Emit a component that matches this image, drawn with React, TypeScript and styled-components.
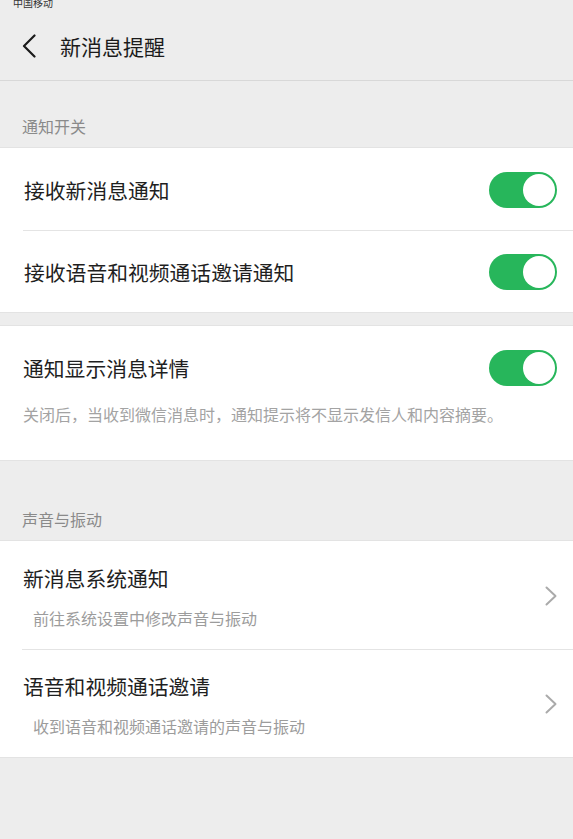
import React from "react";
import styled, { createGlobalStyle } from "styled-components";

const GlobalStyle = createGlobalStyle`
  html, body {
    margin: 0;
    padding: 0;
    background: #ededed;
  }
  body {
    font-family: "Noto Sans CJK SC", "Noto Sans", sans-serif;
    -webkit-font-smoothing: antialiased;
  }
  * { box-sizing: border-box; }
`;

const Page = styled.div`
  width: 573px;
  min-height: 839px;
  background: #ededed;
  display: flex;
  flex-direction: column;
`;

const StatusBar = styled.div`
  height: 12px;
  overflow: hidden;
  display: flex;
  align-items: flex-end;
  padding-left: 13px;
`;

const Carrier = styled.span`
  font-size: 10px;
  line-height: 10px;
  color: #333;
  transform: translateY(-4px);
`;

const NavBar = styled.div`
  height: 69px;
  display: flex;
  align-items: center;
  padding-left: 22px;
  gap: 24px;
  border-bottom: 1px solid #d8d8d8;
`;

const NavTitle = styled.h1`
  margin: 0;
  font-size: 21px;
  font-weight: 400;
  color: #1b1b1b;
  line-height: 28px;
`;

const SectionLabel = styled.div<{ $h: number }>`
  height: ${(p) => p.$h}px;
  display: flex;
  align-items: flex-end;
  padding: 0 0 10px 22px;
  font-size: 16px;
  line-height: 22px;
  color: #8a8a8a;
`;

const Card = styled.div<{ $mt?: number }>`
  background: #fff;
  margin-top: ${(p) => p.$mt ?? 0}px;
  border-top: 1px solid #e3e3e3;
  border-bottom: 1px solid #e3e3e3;
`;

const ToggleRow = styled.div<{ $h: number; $sep?: boolean }>`
  height: ${(p) => p.$h}px;
  display: flex;
  align-items: center;
  justify-content: space-between;
  padding: 0 16px 0 24px;
  position: relative;
  ${(p) =>
    p.$sep
      ? `&::after {
    content: "";
    position: absolute;
    left: 23px;
    right: 0;
    bottom: 0;
    height: 1px;
    background: #e4e4e4;
  }`
      : ""}
`;

const RowTitle = styled.span`
  font-size: 20.8px;
  line-height: 28px;
  color: #1f1f1f;
`;

const DetailBlock = styled.div`
  padding: 24px 0 34px 0;
`;

const DetailHead = styled.div`
  display: flex;
  align-items: center;
  justify-content: space-between;
  padding: 0 16px 0 23px;
  height: 36px;
`;

const Desc = styled.div`
  margin-top: 16px;
  padding-left: 23px;
  font-size: 16px;
  line-height: 24px;
  color: #a3a3a3;
  white-space: nowrap;
`;

const Toggle = styled.div`
  width: 68px;
  height: 36px;
  border-radius: 18px;
  background: #27b65b;
  position: relative;
  flex-shrink: 0;
`;

const Knob = styled.div`
  position: absolute;
  top: 2px;
  right: 2px;
  width: 32px;
  height: 32px;
  border-radius: 50%;
  background: #fff;
`;

const LinkRow = styled.div<{ $h: number; $sep?: boolean }>`
  height: ${(p) => p.$h}px;
  display: flex;
  align-items: center;
  justify-content: space-between;
  padding: 0 16px 0 23px;
  position: relative;
  ${(p) =>
    p.$sep
      ? `&::after {
    content: "";
    position: absolute;
    left: 22px;
    right: 0;
    bottom: 0;
    height: 1px;
    background: #e4e4e4;
  }`
      : ""}
`;

const LinkText = styled.div`
  display: flex;
  flex-direction: column;
  gap: 14px;
  padding-top: 3px;
`;

const LinkSub = styled.span`
  padding-left: 10px;
  font-size: 16px;
  line-height: 24px;
  color: #9c9c9c;
`;

const BackIcon = () => (
  <svg width="14" height="24" viewBox="0 0 14 24" fill="none">
    <polyline
      points="12.5,1.5 2,12 12.5,22.5"
      stroke="#1b1b1b"
      strokeWidth="2.2"
      strokeLinecap="round"
      strokeLinejoin="round"
    />
  </svg>
);

const Chevron = () => (
  <svg width="12" height="20" viewBox="0 0 12 20" fill="none">
    <polyline
      points="1.5,1.5 10.5,10 1.5,18.5"
      stroke="#aaaaaa"
      strokeWidth="2"
      strokeLinecap="round"
      strokeLinejoin="round"
    />
  </svg>
);

const Switch = () => (
  <Toggle>
    <Knob />
  </Toggle>
);

export default function App() {
  return (
    <>
      <GlobalStyle />
      <Page>
        <StatusBar>
          <Carrier>中国移动</Carrier>
        </StatusBar>
        <NavBar>
          <BackIcon />
          <NavTitle>新消息提醒</NavTitle>
        </NavBar>

        <SectionLabel $h={66}>通知开关</SectionLabel>
        <Card>
          <ToggleRow $h={83} $sep>
            <RowTitle>接收新消息通知</RowTitle>
            <Switch />
          </ToggleRow>
          <ToggleRow $h={81}>
            <RowTitle>接收语音和视频通话邀请通知</RowTitle>
            <Switch />
          </ToggleRow>
        </Card>

        <Card $mt={12}>
          <DetailBlock>
            <DetailHead>
              <RowTitle>通知显示消息详情</RowTitle>
              <Switch />
            </DetailHead>
            <Desc>关闭后，当收到微信消息时，通知提示将不显示发信人和内容摘要。</Desc>
          </DetailBlock>
        </Card>

        <SectionLabel $h={79}>声音与振动</SectionLabel>
        <Card>
          <LinkRow $h={109} $sep>
            <LinkText>
              <RowTitle>新消息系统通知</RowTitle>
              <LinkSub>前往系统设置中修改声音与振动</LinkSub>
            </LinkText>
            <Chevron />
          </LinkRow>
          <LinkRow $h={107}>
            <LinkText>
              <RowTitle>语音和视频通话邀请</RowTitle>
              <LinkSub>收到语音和视频通话邀请的声音与振动</LinkSub>
            </LinkText>
            <Chevron />
          </LinkRow>
        </Card>
      </Page>
    </>
  );
}
